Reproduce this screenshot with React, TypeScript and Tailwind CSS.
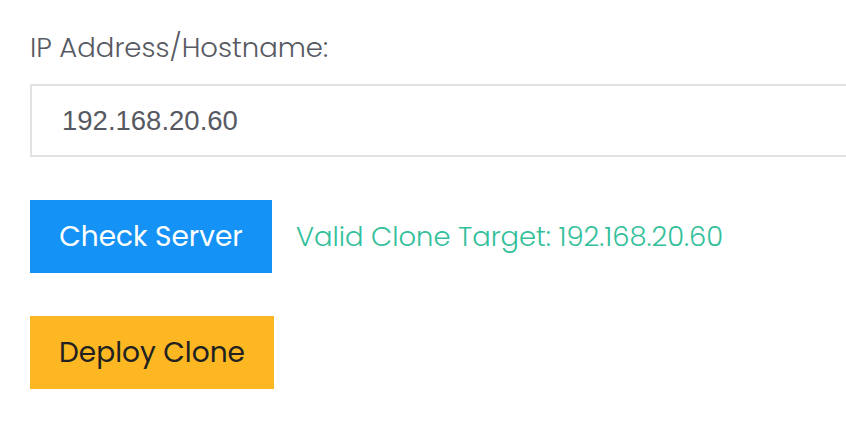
import React, { useState } from 'react';

export default function App() {
  const [host, setHost] = useState('192.168.20.60');

  return (
    <div className="w-[846px] h-[435px] overflow-hidden bg-white font-['Poppins','Open_Sans',sans-serif]">
      <div className="pl-[30px] pt-[30px]">
        <label className="block text-[27.5px] leading-[36px] font-light text-[#575962]">
          IP Address/Hostname:
        </label>
        <input
          value={host}
          onChange={(e) => setHost(e.target.value)}
          className="mt-[18px] block w-[900px] h-[73px] border-2 border-[#e2e2e2] bg-white pl-[30px] text-[27.5px] text-[#575962] font-['Liberation_Sans',Arial,sans-serif] outline-none"
        />
        <div className="mt-[43px] flex items-center gap-[24px]">
          <button className="h-[73px] w-[242px] bg-[#1592f5] text-white text-[28px]">
            Check Server
          </button>
          <span className="text-[27.4px] font-light text-[#34bf9b]">
            Valid Clone Target: {host}
          </span>
        </div>
        <button className="mt-[43px] block h-[73px] w-[244px] bg-[#fdb722] text-[#212121] text-[28px]">
          Deploy Clone
        </button>
      </div>
    </div>
  );
}
